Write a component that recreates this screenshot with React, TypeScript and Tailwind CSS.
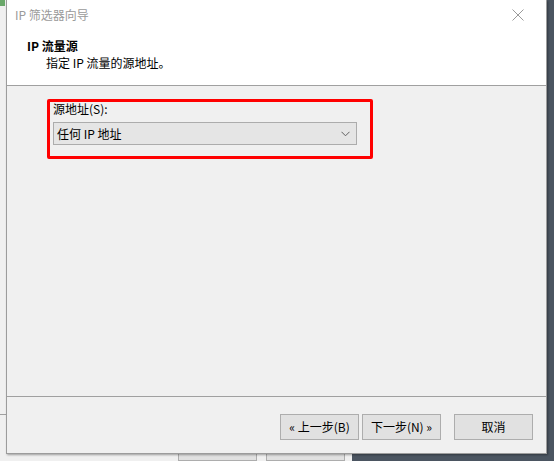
import React from "react";

const font = { fontFamily: '"Noto Sans CJK SC", "Noto Sans", sans-serif' };

function WinButton({ children, className = "" }: { children: React.ReactNode; className?: string }) {
  return (
    <div
      className={
        "w-[79px] h-[26px] flex items-center justify-center border border-[#adadad] bg-[#e1e1e1] text-[12px] text-black " +
        className
      }
    >
      {children}
    </div>
  );
}

export default function App() {
  return (
    <div className="relative w-[554px] h-[461px] overflow-hidden bg-[#4b5561]" style={font}>
      {/* background window behind the dialog */}
      <div className="w-[352px] h-[461px] bg-[#f0f0f0] flex flex-col">
        <div className="flex">
          <div className="w-[5px] h-[6px] bg-[#6aa86a]" />
        </div>
        <div className="h-[424px]" />
        <div className="w-[7px] h-px bg-[#a0a0a0]" />
        <div className="flex gap-[9px] pl-[178px] pt-[20px]">
          <WinButton>确定</WinButton>
          <WinButton>取消</WinButton>
        </div>
      </div>

      {/* dialog window */}
      <div className="absolute left-[6px] top-0 w-[541px] h-[454px] border border-[#9c9c9c] border-t-0 bg-[#f0f0f0] flex flex-col shadow-[1px_1px_2px_rgba(0,0,0,0.35)]">
        {/* white header */}
        <div className="h-[86px] bg-white border-b border-[#a0a0a0] flex flex-col">
          <div className="h-[30px] flex items-center justify-between pl-[8px] pr-[22px]">
            <span className="text-[12px] text-[#9a9a9a] leading-none">IP 筛选器向导</span>
            <svg width="12" height="12" viewBox="0 0 12 12">
              <path d="M0.5 0.5 L11.5 11.5 M11.5 0.5 L0.5 11.5" stroke="#9a9a9a" strokeWidth="1" fill="none" />
            </svg>
          </div>
          <div className="pl-[20px] pt-[8px] text-[12px] font-bold leading-[16px] text-black">IP 流量源</div>
          <div className="pl-[39px] pt-[1px] text-[12px] leading-[16px] text-black">指定 IP 流量的源地址。</div>
        </div>

        {/* content */}
        <div className="flex-1 pl-[40px] pt-[13px]">
          <div className="w-[326px] h-[60px] border-[3px] border-[#ff0000] rounded-[2px] pl-[3px] flex flex-col">
            <div className="text-[12px] leading-[14px] text-black">源地址(S):</div>
            <div className="mt-[6px] w-[304px] h-[23px] border border-[#acacac] bg-[#e5e5e5] flex items-center justify-between pl-[3px] pr-[6px]">
              <span className="text-[12px] text-black leading-none">任何 IP 地址</span>
              <svg width="9" height="6" viewBox="0 0 9 6">
                <path d="M0.5 0.8 L4.5 4.8 L8.5 0.8" stroke="#606060" strokeWidth="1" fill="none" />
              </svg>
            </div>
          </div>
        </div>

        {/* footer */}
        <div className="h-[57px] border-t border-[#a0a0a0] flex items-start pt-[17px] pl-[273px]">
          <WinButton>« 上一步(B)</WinButton>
          <WinButton className="ml-[3px]">下一步(N) »</WinButton>
          <WinButton className="ml-[13px]">取消</WinButton>
        </div>
      </div>
    </div>
  );
}
